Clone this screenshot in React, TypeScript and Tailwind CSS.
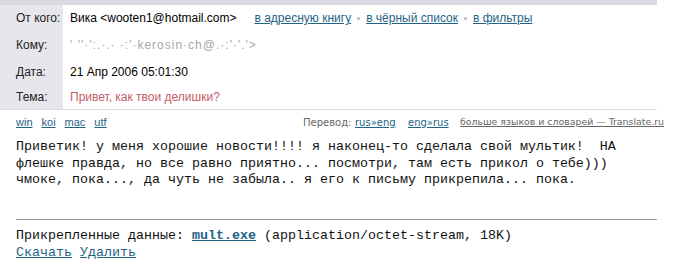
import React from 'react';

const LINK = 'text-[#1f6487] underline';

function Dot() {
  return <span className="mx-[6px] inline-block h-[3px] w-[3px] bg-[#c8c8c8] align-middle" />;
}

function HeaderRow({ label, children, h }: { label: string; children: React.ReactNode; h: string }) {
  return (
    <div className={`flex ${h}`}>
      <div className="flex w-[63px] shrink-0 items-center bg-[#e6e6ec] pl-[16px] text-[#222]">{label}</div>
      <div className="flex flex-1 items-center pl-[7px]">{children}</div>
    </div>
  );
}

export default function App() {
  return (
    <div className="h-[267px] w-[677px] overflow-hidden bg-white font-['Liberation_Sans',Arial,sans-serif] text-[12px] text-black">
      {/* header block */}
      <div className="w-[657px] border-b border-[#dedee2]">
        <div className="h-[5px] bg-[#d9d9e1]" />
        <HeaderRow label="От кого:" h="h-[26px]">
          <span>Вика &lt;wooten1@hotmail.com&gt;</span>
          <span className="ml-[18px] flex items-center">
            <a className={LINK}>в адресную книгу</a>
            <Dot />
            <a className={LINK}>в чёрный список</a>
            <Dot />
            <a className={LINK}>в фильтры</a>
          </span>
        </HeaderRow>
        <HeaderRow label="Кому:" h="h-[27px]">
          <span className="text-[#a8a8a8] tracking-[1px]">' ''·':.·.· ·:'·kerosin·ch@.·:'·'.'&gt;</span>
        </HeaderRow>
        <HeaderRow label="Дата:" h="h-[27px]">
          <span>21 Апр 2006 05:01:30</span>
        </HeaderRow>
        <HeaderRow label="Тема:" h="h-[24px]">
          <span className="text-[#c45c68]">Привет, как твои делишки?</span>
        </HeaderRow>
      </div>

      {/* encodings / translate */}
      <div className="flex h-[24px] w-[657px] items-center whitespace-nowrap pl-[16px] text-[11px]">
        <div className="flex w-[287px] shrink-0 gap-[9px]">
          <a className={LINK}>win</a>
          <a className={LINK}>koi</a>
          <a className={LINK}>mac</a>
          <a className={LINK}>utf</a>
        </div>
        <div className="flex items-center font-['DejaVu_Sans',Verdana,sans-serif] text-[10px]">
          <span className="w-[52px] shrink-0 text-[#666]">Перевод:</span>
          <span className="w-[53px] shrink-0"><a className={LINK}>rus»eng</a></span>
          <span className="w-[52px] shrink-0"><a className={LINK}>eng»rus</a></span>
          <a className="shrink-0 text-[9.4px] text-[#666] underline">больше языков и словарей — Translate.ru</a>
        </div>
      </div>

      {/* body */}
      <pre className="mt-[5px] pl-[16px] font-['Liberation_Mono','Courier_New',monospace] text-[13.33px] leading-[16.5px] text-[#111]">
{`Приветик! у меня хорошие новости!!!! я наконец-то сделала свой мультик!  НА
флешке правда, но все равно приятно... посмотри, там есть прикол о тебе)))
чмоке, пока..., да чуть не забыла.. я его к письму прикрепила... пока.`}
      </pre>

      {/* attachment */}
      <div className="ml-[16px] mt-[30px] w-[641px] border-t border-[#9a9a9a]" />
      <div className="mt-[8px] pl-[16px] font-['Liberation_Mono','Courier_New',monospace] text-[13.33px] leading-[16.5px] text-[#111]">
        <div>
          Прикрепленные данные: <a className={`${LINK} font-bold`}>mult.exe</a> (application/octet-stream, 18K)
        </div>
        <div className="mt-[1px] flex gap-[8px]">
          <a className={LINK}>Скачать</a>
          <a className={LINK}>Удалить</a>
        </div>
      </div>
    </div>
  );
}
